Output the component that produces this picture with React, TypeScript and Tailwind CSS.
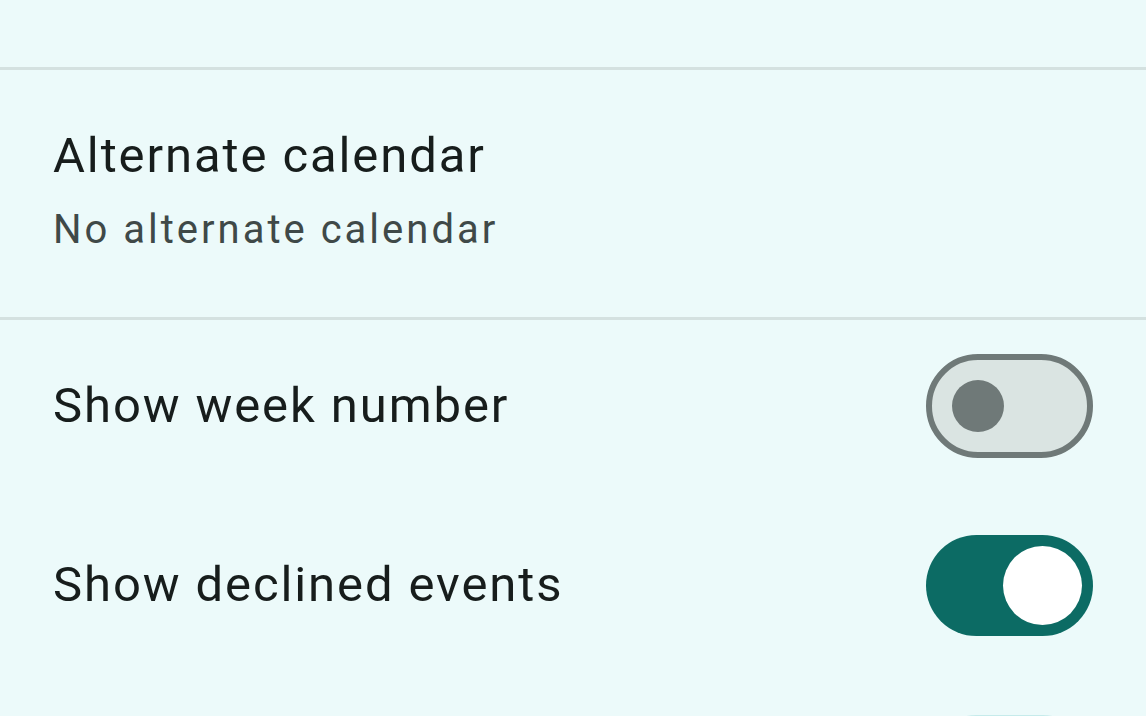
import React from "react";

function Toggle({ on, faded }: { on: boolean; faded?: boolean }) {
  if (on) {
    return (
      <div
        className={
          faded
            ? "flex h-[101px] w-[167px] shrink-0 items-center justify-end rounded-full bg-[#c6ebeb] pr-[11px]"
            : "flex h-[101px] w-[167px] shrink-0 items-center justify-end rounded-full bg-[#0c6b64] pr-[11px]"
        }
      >
        <div className="h-[79px] w-[79px] rounded-full bg-white" />
      </div>
    );
  }
  return (
    <div className="flex h-[104px] w-[167px] shrink-0 items-center rounded-full border-[6px] border-[#6f7978] bg-[#dae4e2] pl-[20px]">
      <div className="h-[52px] w-[52px] rounded-full bg-[#6f7978]" />
    </div>
  );
}

export default function App() {
  return (
    <div
      className="h-[716px] w-[1146px] overflow-hidden bg-[#ecfafa] text-[#171d1c]"
      style={{ fontFamily: "Roboto, 'Noto Sans', sans-serif" }}
    >
      <div className="h-[67px]" />
      <div className="h-[3px] bg-[#d4e1e0]" />
      <div className="flex h-[247px] flex-col pl-[53px] pt-[56px]">
        <div className="text-[49px] leading-[60px] tracking-[1.9px]">Alternate calendar</div>
        <div className="mt-[19px] text-[40px] leading-[50px] tracking-[3px] text-[#3f4948]">No alternate calendar</div>
      </div>
      <div className="h-[3px] bg-[#d4e1e0]" />
      <div className="flex h-[172px] items-center justify-between pl-[53px] pr-[53px]">
        <span className="text-[49px] leading-[60px] tracking-[1.9px]">Show week number</span>
        <Toggle on={false} />
      </div>
      <div className="flex h-[186px] items-center justify-between pl-[53px] pr-[53px]">
        <span className="text-[49px] leading-[60px] tracking-[1.9px]">Show declined events</span>
        <Toggle on={true} />
      </div>
      <div className="flex h-[174px] items-center justify-end pr-[53px]">
        <Toggle on={true} faded />
      </div>
    </div>
  );
}
